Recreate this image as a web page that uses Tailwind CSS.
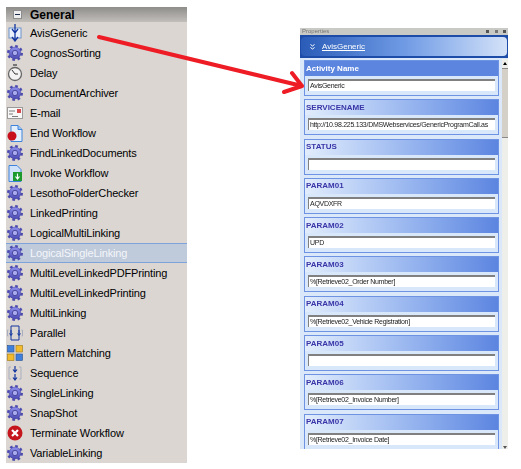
<!DOCTYPE html>
<html lang="en">
<head>
  <meta charset="UTF-8">
  <title>Activities</title>
  <script src="https://cdn.jsdelivr.net/npm/@tailwindcss/browser@4"></script>
</head>
<body class="relative bg-white w-[521px] h-[469px] overflow-hidden font-['Liberation_Sans',sans-serif]">
  <svg width="0" height="0" class="absolute">
    <defs>
      <linearGradient id="gearfill" x1="0" y1="0" x2="0" y2="1">
        <stop offset="0" stop-color="#8f8fec"/>
        <stop offset="1" stop-color="#4a4ab4"/>
      </linearGradient>
      <symbol id="gear" viewBox="0 0 16 16">
        <circle cx="8" cy="8" r="6.700" fill="none" stroke="#4c4cb0" stroke-width="2.600" stroke-dasharray="2.630 2.630"/>
        <circle cx="8" cy="8" r="5.900" fill="url(#gearfill)" stroke="#3f3f9c" stroke-width=".5"/>
        <circle cx="8" cy="8" r="2.700" fill="#a9a9ee" stroke="#37378e" stroke-width=".8"/>
      </symbol>
    </defs>
  </svg>

  <div class="absolute left-[6px] top-[7px] w-[181px] h-[456px] bg-[#dbd6d2] text-[11px] tracking-[-0.15px] leading-[20px] text-black">
    <div class="h-[15px] flex items-center gap-[8px] pl-[7px] bg-gradient-to-b from-[#8f8d8a] to-[#c2bfbb] font-bold text-[12px] tracking-normal">
      <span class="w-[9px] h-[9px] bg-[#eeeeee] border border-[#8d8d8d] flex items-center justify-center"><span class="w-[5px] h-px bg-[#1d2a50]"></span></span>
      <span>General</span>
    </div>
    <div class="flex flex-col pt-[1px]">
      <div class="h-[20px] flex items-center gap-[7px] pl-[1px]"><svg width="16" height="18" viewBox="0 0 16 18"><rect x="2" y="4" width="12" height="10" fill="#e8f0fb" stroke="#6f92c8"/><path d="M8 0v17M5 13l3 4 3-4M5 5l3 4 3-4" fill="none" stroke="#12359f" stroke-width="1.300"/></svg><span>AvisGeneric</span></div>
      <div class="h-[20px] flex items-center gap-[7px] pl-[1px]"><svg width="16" height="16"><use href="#gear"/></svg><span>CognosSorting</span></div>
      <div class="h-[20px] flex items-center gap-[7px] pl-[1px]"><svg width="16" height="18" viewBox="0 0 16 18"><rect x="6" y="0" width="4" height="2" fill="#777"/><circle cx="8" cy="10" r="6.500" fill="#f3f3f3" stroke="#666" stroke-width="1.300"/><path d="M8 10 5 6M8 10h3" stroke="#333" fill="none"/></svg><span>Delay</span></div>
      <div class="h-[20px] flex items-center gap-[7px] pl-[1px]"><svg width="16" height="16"><use href="#gear"/></svg><span>DocumentArchiver</span></div>
      <div class="h-[20px] flex items-center gap-[7px] pl-[1px]"><svg width="16" height="12" viewBox="0 0 16 12"><rect x=".5" y=".5" width="15" height="11" fill="#f7f7f7" stroke="#9a9a9a"/><rect x="10" y="2" width="4" height="4" fill="#d8484a"/><path d="M2 4h6M2 7h4M5 9.500h6" stroke="#7a7a7a"/></svg><span>E-mail</span></div>
      <div class="h-[20px] flex items-center gap-[7px] pl-[1px]"><svg width="16" height="17" viewBox="0 0 16 17"><path d="M4 .5h7l4 4v12H4z" fill="#e4effc" stroke="#3f84dc"/><path d="M11 .5v4h4" fill="#9cc4f2" stroke="#3f84dc"/><circle cx="5" cy="11" r="4.500" fill="#c8101c"/></svg><span>End Workflow</span></div>
      <div class="h-[20px] flex items-center gap-[7px] pl-[1px]"><svg width="16" height="16"><use href="#gear"/></svg><span>FindLinkedDocuments</span></div>
      <div class="h-[20px] flex items-center gap-[7px] pl-[1px]"><svg width="16" height="17" viewBox="0 0 16 17"><path d="M2 .5h8l4 4v12H2z" fill="#cfe2fa" stroke="#3f84dc"/><rect x="6" y="7" width="9" height="9" fill="#1c9a2e"/><path d="M10.500 8.500v5M8.500 11.500l2 2.500 2-2.500" fill="none" stroke="#fff" stroke-width="1.200"/></svg><span>Invoke Workflow</span></div>
      <div class="h-[20px] flex items-center gap-[7px] pl-[1px]"><svg width="16" height="16"><use href="#gear"/></svg><span>LesothoFolderChecker</span></div>
      <div class="h-[20px] flex items-center gap-[7px] pl-[1px]"><svg width="16" height="16"><use href="#gear"/></svg><span>LinkedPrinting</span></div>
      <div class="h-[20px] flex items-center gap-[7px] pl-[1px]"><svg width="16" height="16"><use href="#gear"/></svg><span>LogicalMultiLinking</span></div>
      <div class="h-[20px] flex items-center gap-[7px] pl-[1px] bg-[#bfcadb] border-y border-[#7ea3da] text-[#f4f6fa]"><svg width="16" height="16"><use href="#gear"/></svg><span>LogicalSingleLinking</span></div>
      <div class="h-[20px] flex items-center gap-[7px] pl-[1px]"><svg width="16" height="16"><use href="#gear"/></svg><span>MultiLevelLinkedPDFPrinting</span></div>
      <div class="h-[20px] flex items-center gap-[7px] pl-[1px]"><svg width="16" height="16"><use href="#gear"/></svg><span>MultiLevelLinkedPrinting</span></div>
      <div class="h-[20px] flex items-center gap-[7px] pl-[1px]"><svg width="16" height="16"><use href="#gear"/></svg><span>MultiLinking</span></div>
      <div class="h-[20px] flex items-center gap-[7px] pl-[1px]"><svg width="16" height="16" viewBox="0 0 16 16"><path d="M4 1h8v14H4z" fill="none" stroke="#12359f"/><path d="M4 5v5M2.500 8.500 4 10.500l1.500-2M12 5v5M10.500 8.500l1.500 2 1.500-2" fill="none" stroke="#12359f"/><path d="M1.500 5H.5v6h1M14.500 5h1v6h-1" fill="none" stroke="#a9afbf"/></svg><span>Parallel</span></div>
      <div class="h-[20px] flex items-center gap-[7px] pl-[1px]"><svg width="16" height="16" viewBox="0 0 16 16"><rect x=".5" y=".5" width="6.500" height="6.500" fill="#3f7fdc" stroke="#28518f" stroke-width=".6"/><rect x="9" y=".5" width="6.500" height="6.500" fill="#f2bb2e" stroke="#9c7714" stroke-width=".6"/><rect x=".5" y="9" width="6.500" height="6.500" fill="#f2bb2e" stroke="#9c7714" stroke-width=".6"/><rect x="9" y="9" width="6.500" height="6.500" fill="#3f7fdc" stroke="#28518f" stroke-width=".6"/></svg><span>Pattern Matching</span></div>
      <div class="h-[20px] flex items-center gap-[7px] pl-[1px]"><svg width="16" height="16" viewBox="0 0 16 16"><path d="M4 2H2v12h2M12 2h2v12h-2" fill="none" stroke="#a9afbf"/><path d="M8 1v6M6 4.500 8 7l2-2.500M8 9v6M6 12.500 8 15l2-2.500" fill="none" stroke="#12359f" stroke-width="1.200"/></svg><span>Sequence</span></div>
      <div class="h-[20px] flex items-center gap-[7px] pl-[1px]"><svg width="16" height="16"><use href="#gear"/></svg><span>SingleLinking</span></div>
      <div class="h-[20px] flex items-center gap-[7px] pl-[1px]"><svg width="16" height="16"><use href="#gear"/></svg><span>SnapShot</span></div>
      <div class="h-[20px] flex items-center gap-[7px] pl-[1px]"><svg width="16" height="16" viewBox="0 0 16 16"><circle cx="8" cy="8" r="7.500" fill="#c4161c"/><path d="M5 5l6 6M11 5l-6 6" stroke="#fff" stroke-width="2.200"/></svg><span>Terminate Workflow</span></div>
      <div class="h-[20px] flex items-center gap-[7px] pl-[1px]"><svg width="16" height="16"><use href="#gear"/></svg><span>VariableLinking</span></div>
    </div>
  </div>

  <div class="absolute left-[300px] top-[28px] w-[208px] h-[421px] bg-[#dbe8fa] overflow-hidden blur-[0.4px] text-[8px] leading-none">
    <div class="h-[7px] bg-[#c9c9c5] text-[#777] text-[6px] pl-[2px] leading-[7px] flex justify-between pr-[2px]"><span>Properties</span><span class="w-[20px] flex justify-between items-center"><span class="w-[3px] h-[3px] bg-[#555]"></span><span class="w-[3px] h-[3px] bg-[#777]"></span><span class="w-[3px] h-[3px] bg-[#555]"></span></span></div>
    <div class="h-[23px] bg-[#1c4ca8] px-[1px] py-[2px]">
      <div class="h-full rounded-sm bg-gradient-to-r from-[#2a5cb8] via-[#6f9ae4] to-[#d4e2f8] flex items-center pl-[9px] gap-[7px] text-white underline"><svg width="5" height="6" viewBox="0 0 5 6"><path d="M.5.500 2.500 2l2-1.500M.5 3.500 2.500 5l2-1.500" fill="none" stroke="#fff"/></svg><span>AvisGeneric</span></div>
    </div>
    <div class="flex">
      <div class="w-[202px] flex flex-col gap-[3.300px] pt-[2px] pl-[4px]">
        <div class="h-[36px] w-[195px] shrink-0 border border-[#6d93e2] bg-[#d9e7fb]"><div class="h-[15px] px-[1px] flex items-center bg-[#5c85e0] text-white font-bold">Activity Name</div><div class="mx-[3px] mt-[3px] h-[12px] bg-white border-t-2 border-l border-[#808080] pl-[1px] leading-[10px] text-[7px] tracking-[-0.29px] text-[#222] whitespace-nowrap overflow-hidden">AvisGeneric</div></div>
        <div class="h-[36px] w-[195px] shrink-0 border border-[#6d93e2] bg-[#d9e7fb]"><div class="h-[15px] px-[1px] flex items-center bg-gradient-to-r from-[#e2edfc] to-[#5c85e0] text-[#3a35a8] font-bold">SERVICENAME</div><div class="mx-[3px] mt-[3px] h-[12px] bg-white border-t-2 border-l border-[#808080] pl-[1px] leading-[10px] text-[7px] tracking-[-0.29px] text-[#222] whitespace-nowrap overflow-hidden">http://10.98.225.133/DMSWebservices/GenericProgramCall.as</div></div>
        <div class="h-[36px] w-[195px] shrink-0 border border-[#6d93e2] bg-[#d9e7fb]"><div class="h-[15px] px-[1px] flex items-center bg-gradient-to-r from-[#e2edfc] to-[#5c85e0] text-[#3a35a8] font-bold">STATUS</div><div class="mx-[3px] mt-[3px] h-[12px] bg-white border-t-2 border-l border-[#808080]"></div></div>
        <div class="h-[36px] w-[195px] shrink-0 border border-[#6d93e2] bg-[#d9e7fb]"><div class="h-[15px] px-[1px] flex items-center bg-gradient-to-r from-[#e2edfc] to-[#5c85e0] text-[#3a35a8] font-bold">PARAM01</div><div class="mx-[3px] mt-[3px] h-[12px] bg-white border-t-2 border-l border-[#808080] pl-[1px] leading-[10px] text-[7px] tracking-[-0.29px] text-[#222] whitespace-nowrap overflow-hidden">AQVDXFR</div></div>
        <div class="h-[36px] w-[195px] shrink-0 border border-[#6d93e2] bg-[#d9e7fb]"><div class="h-[15px] px-[1px] flex items-center bg-gradient-to-r from-[#e2edfc] to-[#5c85e0] text-[#3a35a8] font-bold">PARAM02</div><div class="mx-[3px] mt-[3px] h-[12px] bg-white border-t-2 border-l border-[#808080] pl-[1px] leading-[10px] text-[7px] tracking-[-0.29px] text-[#222] whitespace-nowrap overflow-hidden">UPD</div></div>
        <div class="h-[36px] w-[195px] shrink-0 border border-[#6d93e2] bg-[#d9e7fb]"><div class="h-[15px] px-[1px] flex items-center bg-gradient-to-r from-[#e2edfc] to-[#5c85e0] text-[#3a35a8] font-bold">PARAM03</div><div class="mx-[3px] mt-[3px] h-[12px] bg-white border-t-2 border-l border-[#808080] pl-[1px] leading-[10px] text-[7px] tracking-[-0.29px] text-[#222] whitespace-nowrap overflow-hidden">%[Retrieve02_Order Number]</div></div>
        <div class="h-[36px] w-[195px] shrink-0 border border-[#6d93e2] bg-[#d9e7fb]"><div class="h-[15px] px-[1px] flex items-center bg-gradient-to-r from-[#e2edfc] to-[#5c85e0] text-[#3a35a8] font-bold">PARAM04</div><div class="mx-[3px] mt-[3px] h-[12px] bg-white border-t-2 border-l border-[#808080] pl-[1px] leading-[10px] text-[7px] tracking-[-0.29px] text-[#222] whitespace-nowrap overflow-hidden">%[Retrieve02_Vehicle Registration]</div></div>
        <div class="h-[36px] w-[195px] shrink-0 border border-[#6d93e2] bg-[#d9e7fb]"><div class="h-[15px] px-[1px] flex items-center bg-gradient-to-r from-[#e2edfc] to-[#5c85e0] text-[#3a35a8] font-bold">PARAM05</div><div class="mx-[3px] mt-[3px] h-[12px] bg-white border-t-2 border-l border-[#808080]"></div></div>
        <div class="h-[36px] w-[195px] shrink-0 border border-[#6d93e2] bg-[#d9e7fb]"><div class="h-[15px] px-[1px] flex items-center bg-gradient-to-r from-[#e2edfc] to-[#5c85e0] text-[#3a35a8] font-bold">PARAM06</div><div class="mx-[3px] mt-[3px] h-[12px] bg-white border-t-2 border-l border-[#808080] pl-[1px] leading-[10px] text-[7px] tracking-[-0.29px] text-[#222] whitespace-nowrap overflow-hidden">%[Retrieve02_Invoice Number]</div></div>
        <div class="h-[36px] w-[195px] shrink-0 border border-[#6d93e2] bg-[#d9e7fb]"><div class="h-[15px] px-[1px] flex items-center bg-gradient-to-r from-[#e2edfc] to-[#5c85e0] text-[#3a35a8] font-bold">PARAM07</div><div class="mx-[3px] mt-[3px] h-[12px] bg-white border-t-2 border-l border-[#808080] pl-[1px] leading-[10px] text-[7px] tracking-[-0.29px] text-[#222] whitespace-nowrap overflow-hidden">%[Retrieve02_Invoice Date]</div></div>
      </div>
      <div class="w-[6px] h-[391px] mt-[1px] bg-[#eeeeea] flex flex-col">
        <div class="h-[9px] flex items-center justify-center"><span class="border-x-[2px] border-b-[3px] border-x-transparent border-b-black"></span></div>
        <div class="h-[70px] bg-[#d4d0c8] border-y border-[#888]"></div>
        <div class="mt-auto h-[6px] flex items-center justify-center"><span class="border-x-[2px] border-t-[3px] border-x-transparent border-t-[#555]"></span></div>
      </div>
    </div>
  </div>

  <svg class="absolute left-0 top-0 pointer-events-none" width="521" height="469" viewBox="0 0 521 469">
    <path d="M99 37 302 86M292 73l10 13-18 6" fill="none" stroke="#ee1c25" stroke-width="4" stroke-linejoin="round" stroke-linecap="round"/>
  </svg>
</body>
</html>
